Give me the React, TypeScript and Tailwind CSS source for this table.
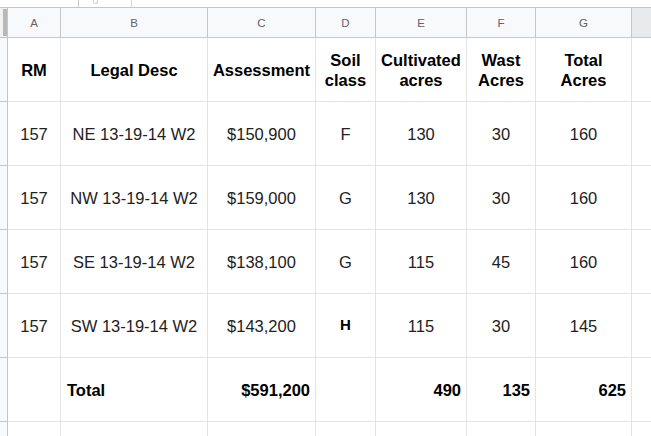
import React from "react";

type Row = {
    rm: string;
    legal: string;
    assessment: string;
    soil: string;
    cultivated: string;
    wast: string;
    total: string;
};

const rows: Row[] = [
    { rm: "157", legal: "NE 13-19-14 W2", assessment: "$150,900", soil: "F", cultivated: "130", wast: "30", total: "160" },
    { rm: "157", legal: "NW 13-19-14 W2", assessment: "$159,000", soil: "G", cultivated: "130", wast: "30", total: "160" },
    { rm: "157", legal: "SE 13-19-14 W2", assessment: "$138,100", soil: "G", cultivated: "115", wast: "45", total: "160" },
    { rm: "157", legal: "SW 13-19-14 W2", assessment: "$143,200", soil: "H", cultivated: "115", wast: "30", total: "145" },
];

const gridCols = "grid grid-cols-[8px_53px_147px_108px_60px_91px_69px_96px_1fr]";
const cell = "h-16 border-r border-b border-[#e2e3e3] flex items-center justify-center text-center";
const rowHead = "h-16 border-r border-b border-[#c4c7c5] bg-[#f8f9fa]";

function Cell({ children, className = "" }: { children?: React.ReactNode; className?: string }) {
    return <div className={`${cell} ${className}`}>{children}</div>;
}

export default function App() {
    const letters = ["A", "B", "C", "D", "E", "F", "G"];

    return (
        <div
            className="w-[651px] h-[436px] overflow-hidden bg-white text-[#222] text-[16.5px] leading-[20px]"
            style={{ fontFamily: '"Liberation Sans", Arial, sans-serif' }}
        >
            {/* formula bar remnant */}
            <div className="h-[7px] flex">
                <div className="w-[78px]" />
                <div className="w-px bg-[#c8c8c8]" />
                <div className="w-[14px]" />
                <div className="w-[5px] h-[4px] rounded-b-full border border-t-0 border-[#d0d0d0]" />
                <div className="w-[33px]" />
                <div className="w-px bg-[#d6d6d6]" />
            </div>

            {/* column letters */}
            <div className={gridCols}>
                <div className="h-[31px] border-t border-b border-r border-[#c4c7c5] bg-[#f1f1f1] flex justify-end">
                    <div className="w-[4px] mt-[1px] mb-[1px] bg-[#b8b8b8]" />
                </div>
                {letters.map((l) => (
                    <div
                        key={l}
                        className="h-[31px] border-t border-b border-r border-[#c4c7c5] bg-[#f8f9fa] flex items-center justify-center text-[11.5px] text-[#5f6368]"
                    >
                        {l}
                    </div>
                ))}
                <div className="h-[31px] border-t border-b border-[#c4c7c5] bg-[#e9eaeb]" />
            </div>

            <div className={gridCols}>
                {/* header row */}
                <div className={rowHead} />
                <Cell className="font-bold text-black">RM</Cell>
                <Cell className="font-bold text-black">Legal Desc</Cell>
                <Cell className="font-bold text-black">Assessment</Cell>
                <Cell className="font-bold text-black">
                    Soil
                    <br />
                    class
                </Cell>
                <Cell className="font-bold text-black">
                    Cultivated
                    <br />
                    acres
                </Cell>
                <Cell className="font-bold text-black">
                    Wast
                    <br />
                    Acres
                </Cell>
                <Cell className="font-bold text-black">
                    Total
                    <br />
                    Acres
                </Cell>
                <div className="h-16 border-b border-[#e2e3e3]" />

                {rows.map((r) => (
                    <React.Fragment key={r.legal}>
                        <div className={rowHead} />
                        <Cell>{r.rm}</Cell>
                        <Cell>{r.legal}</Cell>
                        <Cell>{r.assessment}</Cell>
                        <Cell className={r.soil === "H" ? "font-bold text-[15px] text-black pb-[2px]" : ""}>
                            {r.soil}
                        </Cell>
                        <Cell>{r.cultivated}</Cell>
                        <Cell>{r.wast}</Cell>
                        <Cell>{r.total}</Cell>
                        <div className="h-16 border-b border-[#e2e3e3]" />
                    </React.Fragment>
                ))}

                {/* totals */}
                <div className={rowHead} />
                <Cell />
                <Cell className="!justify-start pl-[6px] font-bold text-black">Total</Cell>
                <Cell className="!justify-end pr-[5px] font-bold text-black">$591,200</Cell>
                <Cell />
                <Cell className="!justify-end pr-[5px] font-bold text-black">490</Cell>
                <Cell className="!justify-end pr-[5px] font-bold text-black">135</Cell>
                <Cell className="!justify-end pr-[5px] font-bold text-black">625</Cell>
                <div className="h-16 border-b border-[#e2e3e3]" />

                {/* empty row */}
                <div className={rowHead} />
                <Cell />
                <Cell />
                <Cell />
                <Cell />
                <Cell />
                <Cell />
                <Cell />
                <div className="h-16 border-b border-[#e2e3e3]" />
            </div>
        </div>
    );
}
